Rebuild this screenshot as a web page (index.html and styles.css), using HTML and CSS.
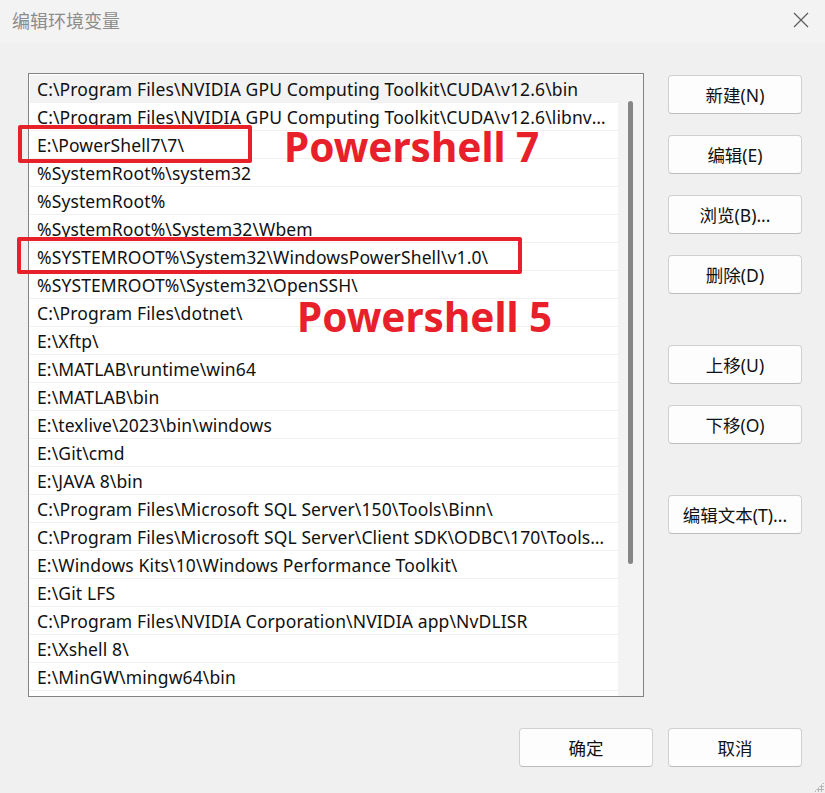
FILE: index.html
```html
<!DOCTYPE html>
<html>
  <head>
    <title>编辑环境变量</title>
    <link rel="stylesheet" href="styles.css">
  </head>
  <body>
    <div class="dialog">
      <div class="titlebar">
        <span class="title">编辑环境变量</span>
        <span class="close">
          <svg width="16" height="16" viewBox="0 0 16 16">
            <path d="M1 1 L15 15 M15 1 L1 15" stroke="#5c5c5c" stroke-width="1.2" fill="none" />
          </svg>
        </span>
      </div>

      <div class="content">
        <div class="listbox">
          <ul class="paths">
            <li class="selected">C:\Program Files\NVIDIA GPU Computing Toolkit\CUDA\v12.6\bin</li>
            <li>C:\Program Files\NVIDIA GPU Computing Toolkit\CUDA\v12.6\libnvvp</li>
            <li>E:\PowerShell7\7\</li>
            <li>%SystemRoot%\system32</li>
            <li>%SystemRoot%</li>
            <li>%SystemRoot%\System32\Wbem</li>
            <li>%SYSTEMROOT%\System32\WindowsPowerShell\v1.0\</li>
            <li>%SYSTEMROOT%\System32\OpenSSH\</li>
            <li>C:\Program Files\dotnet\</li>
            <li>E:\Xftp\</li>
            <li>E:\MATLAB\runtime\win64</li>
            <li>E:\MATLAB\bin</li>
            <li>E:\texlive\2023\bin\windows</li>
            <li>E:\Git\cmd</li>
            <li>E:\JAVA 8\bin</li>
            <li>C:\Program Files\Microsoft SQL Server\150\Tools\Binn\</li>
            <li>C:\Program Files\Microsoft SQL Server\Client SDK\ODBC\170\Tools\Binn\</li>
            <li>E:\Windows Kits\10\Windows Performance Toolkit\</li>
            <li>E:\Git LFS</li>
            <li>C:\Program Files\NVIDIA Corporation\NVIDIA app\NvDLISR</li>
            <li>E:\Xshell 8\</li>
            <li>E:\MinGW\mingw64\bin</li>
          </ul>
          <div class="scrollbar"><div class="thumb"></div></div>
        </div>

        <div class="side-buttons">
          <button class="btn">新建(N)</button>
          <button class="btn">编辑(E)</button>
          <button class="btn">浏览(B)...</button>
          <button class="btn">删除(D)</button>
          <button class="btn group">上移(U)</button>
          <button class="btn">下移(O)</button>
          <button class="btn group">编辑文本(T)...</button>
        </div>
      </div>

      <div class="footer">
        <button class="btn">确定</button>
        <button class="btn">取消</button>
      </div>

      <span class="grip"></span>

      <!-- annotations drawn over the screenshot -->
      <div class="mark mark-ps7"></div>
      <div class="mark mark-ps5"></div>
      <div class="note note-ps7">Powershell 7</div>
      <div class="note note-ps5">Powershell 5</div>
    </div>
  </body>
</html>
```

FILE: styles.css
```css
/* dialog */
body {
  margin: 0;
  font-family: "Noto Sans", "Noto Sans CJK SC", sans-serif;
  background-color: #f0f0f0;
}

.dialog {
  position: relative;
  width: 825px;
  height: 793px;
  background-color: #f0f0f0;
  overflow: hidden;
}

.titlebar {
  height: 43px;
  display: flex;
  align-items: center;
  justify-content: space-between;
  padding: 0 16px 0 12px;
  background-color: #f3f3f3;
  box-sizing: border-box;
}

.title {
  font-size: 18px;
  color: #8c8c8c;
  margin-top: -4px;
}

.close {
  display: flex;
  margin-top: -4px;
}

.content {
  display: flex;
  gap: 24px;
  padding: 30px 0 0 28px;
}

/* path list */
.listbox {
  display: flex;
  width: 616px;
  height: 624px;
  border: 1px solid #838383;
  box-sizing: border-box;
  background-color: #fff;
  padding: 1px 0 0 1px;
}

.paths {
  list-style: none;
  margin: 0;
  padding: 0;
  width: 588px;
}

.paths li {
  height: 28px;
  line-height: 28px;
  padding: 0 12px 0 7px;
  border-bottom: 1px solid #f0f0f0;
  box-sizing: border-box;
  font-size: 17.5px;
  letter-spacing: 0.12px;
  color: #111;
  white-space: nowrap;
  overflow: hidden;
  text-overflow: ellipsis;
}

.paths li.selected {
  background-color: #f3f3f3;
}

.scrollbar {
  flex: 1;
  background-color: #f3f3f3;
  display: flex;
  justify-content: center;
  padding-top: 26px;
}

.thumb {
  width: 5px;
  height: 463px;
  border-radius: 3px;
  background-color: #868686;
}

/* buttons */
.side-buttons {
  display: flex;
  flex-direction: column;
  gap: 21px;
  padding-top: 2px;
}

.side-buttons .group {
  margin-top: 30px;
}

.btn {
  width: 134px;
  height: 39px;
  border: 1px solid #d0d0d0;
  border-bottom-color: #bdbdbd;
  border-radius: 4px;
  background-color: #fdfdfd;
  font-family: "Noto Sans", "Noto Sans CJK SC", sans-serif;
  font-size: 17.5px;
  color: #111;
  padding: 0;
}

.footer {
  display: flex;
  justify-content: flex-end;
  gap: 15px;
  padding: 31px 23px 0 0;
}

.grip {
  position: absolute;
  right: 1px;
  bottom: 1px;
  width: 10px;
  height: 10px;
  background-image: radial-gradient(circle, #b4b4b4 1px, transparent 1.3px);
  background-size: 3px 3px;
  clip-path: polygon(100% 0, 100% 100%, 0 100%);
}

/* red annotations */
.mark {
  position: absolute;
  border: 4px solid #e8202a;
  border-radius: 2px;
  box-sizing: border-box;
}

.mark-ps7 {
  left: 18px;
  top: 125px;
  width: 234px;
  height: 38px;
}

.mark-ps5 {
  left: 17px;
  top: 237px;
  width: 505px;
  height: 37px;
}

.note {
  position: absolute;
  font-family: "Noto Sans", sans-serif;
  font-weight: bold;
  font-size: 40.5px;
  line-height: 1;
  color: #e8202a;
}

.note-ps7 {
  left: 284px;
  top: 127px;
}

.note-ps5 {
  left: 297px;
  top: 297px;
}
```
